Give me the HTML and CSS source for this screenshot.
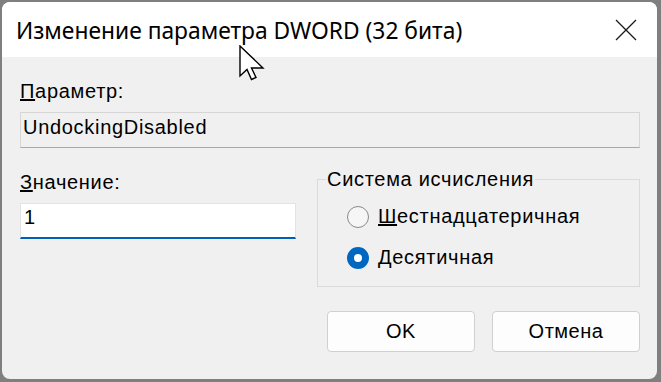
FILE: index.html
```html
<!DOCTYPE html>
<html lang="ru">
<head>
    <meta charset="UTF-8">
    <title>Изменение параметра DWORD (32 бита)</title>
    <link rel="stylesheet" href="styles.css">
</head>
<body>

    <div class="dialog">
        <div class="titleBar">
            <span class="titleText">Изменение параметра DWORD (32 бита)</span>
            <span class="closeButton">
                <svg width="22" height="22" viewBox="0 0 22 22">
                    <path d="M1 1 L21 21 M21 1 L1 21" stroke="#1a1a1a" stroke-width="1.3" fill="none"/>
                </svg>
            </span>
        </div>

        <div class="content">
            <div class="label"><u>П</u>араметр:</div>
            <div class="readField">UndockingDisabled</div>

            <div class="valueRow">
                <div class="valueColumn">
                    <div class="label"><u>З</u>начение:</div>
                    <div class="valueInput">1</div>
                </div>

                <fieldset class="groupBox">
                    <legend>Система исчисления</legend>
                    <div class="radioRow">
                        <span class="radio"></span>
                        <span><u>Ш</u>естнадцатеричная</span>
                    </div>
                    <div class="radioRow">
                        <span class="radio checked"></span>
                        <span><u>Д</u>есятичная</span>
                    </div>
                </fieldset>
            </div>

            <div class="buttonRow">
                <div class="button">OK</div>
                <div class="button">Отмена</div>
            </div>
        </div>

        <!-- указатель мыши -->
        <svg class="cursor" width="28" height="40" viewBox="0 0 28 40">
            <path d="M1 1 L1 31 L8 24.5 L12.5 34.5 L17 32.5 L12.5 23 L24 23 Z" fill="#ffffff" stroke="#000000" stroke-width="1.4" stroke-linejoin="miter"/>
        </svg>
    </div>

</body>
</html>
```

FILE: styles.css
```css
body {
    margin: 0;
    padding: 2px 0 0 2px;
    background-color: #7f7f7f;
    font-family: "Liberation Sans", Arial, sans-serif;
    color: #000000;
}

.dialog {
    position: relative;
    width: 655px;
    height: 377px;
    border-radius: 8px;
    overflow: hidden;
    background-color: #f0f0f0;
    display: flex;
    flex-direction: column;
}

/* Заголовок окна */
.titleBar {
    height: 55px;
    background-color: #ffffff;
    display: flex;
    align-items: center;
    justify-content: space-between;
    padding-left: 14px;
}

.titleText {
    font-family: "Noto Sans", "Open Sans", sans-serif;
    font-size: 22.8px;
    margin-top: 1px;
}

.closeButton {
    width: 63px;
    display: flex;
    justify-content: center;
}

/* Содержимое */
.content {
    padding: 0 17px 0 18px;
    font-size: 20px;
    line-height: 23px;
    letter-spacing: 0.7px;
}

.label {
    margin-top: 23px;
}

.readField {
    margin-top: 9px;
    padding: 3px 0 0 2px;
    box-sizing: border-box;
    height: 36px;
    border: 1px solid #d6d6d6;
    border-bottom-color: #a8a8a8;
}

.valueRow {
    margin-top: 20px;
    display: flex;
    gap: 21px;
}

.valueColumn {
    width: 276px;
}

.valueColumn .label {
    margin-top: 3px;
}

.valueInput {
    margin-top: 9px;
    box-sizing: border-box;
    height: 36px;
    padding: 2px 0 0 3px;
    background-color: #ffffff;
    border: 1px solid #e3e3e3;
    border-bottom: 2px solid #005fb8;
}

/* Группа радиокнопок */
.groupBox {
    flex-grow: 1;
    margin: 0;
    padding: 5px 8px 8px 8px;
    border: 1px solid #dadada;
}

.groupBox legend {
    padding: 0 1px;
}

.radioRow {
    height: 41px;
    display: flex;
    align-items: center;
    padding-left: 21px;
}

.radio {
    width: 22px;
    height: 22px;
    box-sizing: border-box;
    border-radius: 50%;
    border: 1px solid #8a8a8a;
    background-color: #f6f6f6;
    margin-right: 9px;
}

.radio.checked {
    border: 7px solid #0067c0;
    background-color: #ffffff;
}

/* Кнопки */
.buttonRow {
    margin-top: 24px;
    display: flex;
    justify-content: flex-end;
    gap: 17px;
}

.button {
    width: 148px;
    height: 41px;
    box-sizing: border-box;
    display: flex;
    align-items: center;
    justify-content: center;
    background-color: #fdfdfd;
    border: 1px solid #d0d0d0;
    border-radius: 4px;
    letter-spacing: 0.5px;
}

.cursor {
    position: absolute;
    left: 237px;
    top: 43px;
}
```
